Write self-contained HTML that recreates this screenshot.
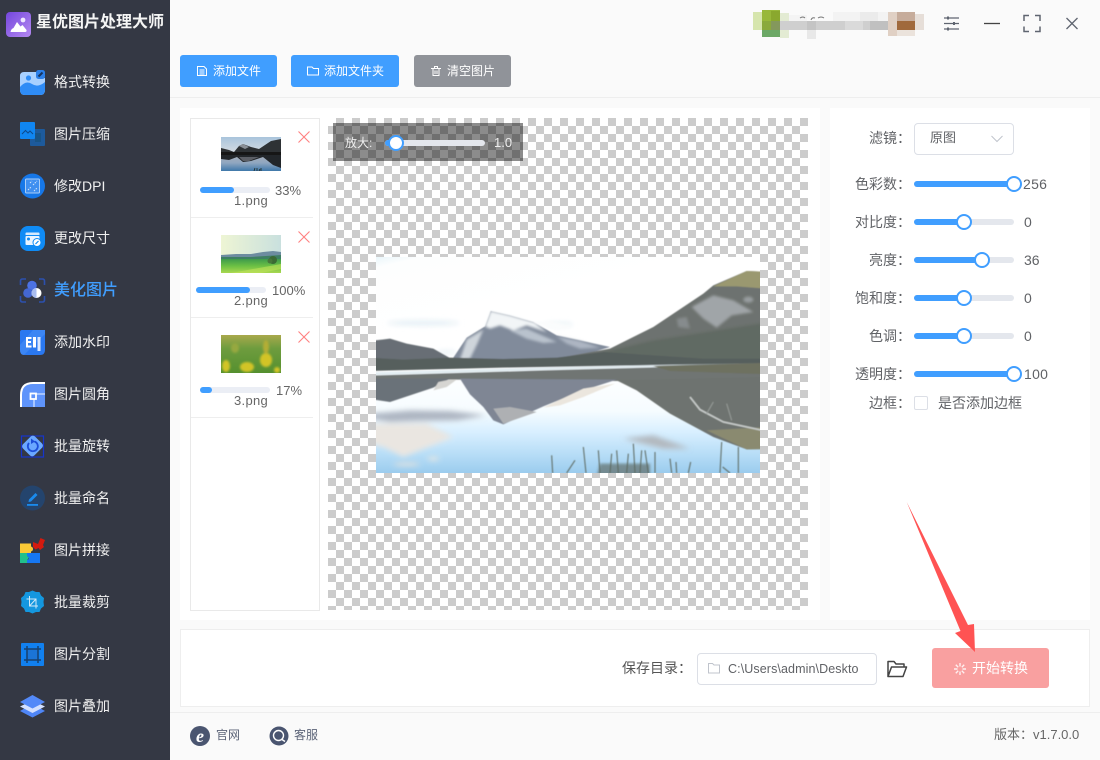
<!DOCTYPE html>
<html lang="zh-CN">
<head>
<meta charset="utf-8">
<title>星优图片处理大师</title>
<style>
*{box-sizing:border-box;margin:0;padding:0}
html,body{width:1100px;height:760px;overflow:hidden;background:#fafafa;font-family:"Liberation Sans","Noto Sans CJK SC",sans-serif}
.a{position:absolute}
.t{position:absolute;white-space:nowrap;line-height:20px}
#side{left:0;top:0;width:170px;height:760px;background:#343844}
.n{left:54px;font-size:14px;color:#f0f0f0}
.btn{position:absolute;top:55px;height:32px;border-radius:3px;background:#409eff}
.btn .t{top:6px;font-size:12px;color:#fff}
.lb{left:832px;width:79px;text-align:right;font-size:14px;color:#606266}
.val{left:1024px;font-size:14px;color:#606266}
.tr{position:absolute;left:914px;width:100px;height:6px;border-radius:3px;background:#e4e7ed}
.fl{position:absolute;left:0;top:0;height:6px;border-radius:3px;background:#409eff}
.kn{position:absolute;width:16px;height:16px;border-radius:50%;background:#fff;border:2px solid #409eff}
.pb{position:absolute;width:70px;height:6px;border-radius:3px;background:#ebeef5}
.pb i{position:absolute;left:0;top:0;height:6px;border-radius:3px;background:#409eff}
.sm{font-size:13px;color:#666}
</style>
</head>
<body>

<!-- Sidebar -->
<div id="side" class="a"></div>
<svg class="a" style="left:6px;top:12px" width="25" height="25" viewBox="0 0 25 25">
<defs><linearGradient id="lg" x1="0" y1="0" x2="1" y2="1"><stop offset="0" stop-color="#7446dc"/><stop offset="1" stop-color="#b58af2"/></linearGradient></defs>
<rect width="25" height="25" rx="4" fill="url(#lg)"/>
<circle cx="17" cy="8" r="2.400" fill="#eee6ff"/>
<path d="M4.500 20Q5 17 7.500 16L11 10L14.500 14.500L16.500 13L20.500 18Q21 20 19 20Z" fill="#fff"/>
</svg>
<div class="t" style="left:36px;top:13px;font-size:16px;font-weight:700;color:#f5f5f5">星优图片处理大师</div>

<!-- Icons -->
<svg class="a" style="left:0;top:0" width="300" height="760" viewBox="0 0 300 760">
<!-- 1 format -->
<path d="M24 72H38V78H45V90Q45 95 40 95H25Q20 95 20 90V76Q20 72 24 72Z" fill="#a8d0ff"/>
<path d="M20 87Q26 80 32 84T45 82V90Q45 95 40 95H25Q20 95 20 90Z" fill="#2f8cf6"/>
<circle cx="28.500" cy="78" r="2.600" fill="#2f8cf6"/>
<rect x="36" y="70" width="9" height="9" rx="2.500" fill="#2b7fe8"/>
<path d="M38.500 76.500L42.500 72.500" stroke="#16345f" stroke-width="2"/>
<!-- 2 compress -->
<rect x="30" y="129" width="15" height="17" rx="1" fill="#1d5a9c"/>
<rect x="20" y="122" width="15" height="17" rx="1" fill="#1086f2"/>
<path d="M22 134L25.500 130.500L28 133L30 131L33 134" fill="none" stroke="#0d4a8c" stroke-width="1"/>
<rect x="35" y="133" width="6" height="9" fill="#17507e" opacity=".7"/>
<!-- 3 dpi -->
<circle cx="32.500" cy="186" r="12.500" fill="#1677e8"/>
<rect x="25.500" y="179" width="14" height="14" rx="1" fill="#3f8ff0" stroke="#a9cdf7" stroke-width="1"/>
<path d="M28 190L31 187M33 185L37 181M30 183L32 181M34 191L37 188" stroke="#d5e6fb" stroke-width="1" stroke-dasharray="1.500 1"/>
<!-- 4 size -->
<rect x="20" y="226" width="25" height="25" rx="8" fill="#0f8bf5"/>
<path d="M26.500 232.500H38.500Q39.500 232.500 39.500 233.500V235H25.500V233.500Q25.500 232.500 26.500 232.500Z" fill="#d4e9fd"/>
<rect x="25.500" y="236" width="14" height="9" rx="1" fill="#e9f4ff"/>
<circle cx="28.500" cy="239" r="1.500" fill="#0f8bf5"/>
<circle cx="37" cy="242.500" r="4" fill="#fff" stroke="#0f8bf5"/>
<path d="M35.500 244L38.500 241" stroke="#0f8bf5" stroke-width="1.200"/>
<!-- 5 beautify -->
<path d="M20.500 285V281Q20.500 279 22.500 279H26M39 279H42.500Q44.500 279 44.500 281V285M44.500 296V300Q44.500 302 42.500 302H39M26 302H22.500Q20.500 302 20.500 300V296" fill="none" stroke="#2c50ad" stroke-width="1.600"/>
<circle cx="32" cy="285.500" r="4.800" fill="#4c72e4"/>
<circle cx="28" cy="293" r="4.800" fill="#4467d2"/>
<circle cx="36.500" cy="293" r="5" fill="#fff"/>
<path d="M36.500 288A5 5 0 0 0 36.500 298Z" fill="#a9bdf0"/>
<!-- 6 watermark -->
<path d="M22 330H45V350Q45 355 40 355H25Q20 355 20 350V332Q20 330 22 330Z" fill="#2a78f0"/>
<path d="M20 345L33 330H45V334L24 355Q20 355 20 350Z" fill="#4a90f6" opacity=".6"/>
<path d="M26 337H31.500V339H28V341H31V343H28V345.500H31.500V347.500H26Z" fill="#fff"/>
<rect x="33" y="337" width="3" height="10.500" fill="#fff"/>
<rect x="37.500" y="337" width="3" height="14" fill="#d7e6ff"/>
<!-- 7 corner -->
<path d="M20 407V395Q20 382 33 382H45V407Z" fill="#fff"/>
<path d="M22 407V395Q22 384 33 384H45V407Z" fill="#5f94fb"/>
<path d="M34 394H45M34 399V407" stroke="#cfe0ff" stroke-width="1.300"/>
<rect x="30.500" y="393.500" width="5.500" height="5.500" fill="#5f94fb" stroke="#fff" stroke-width="1.800"/>
<!-- 8 rotate -->
<rect x="21.500" y="436" width="22" height="21" fill="none" stroke="#1635cc" stroke-width="1.200"/>
<rect x="24.500" y="437.500" width="16" height="17" rx="3" transform="rotate(45 32.500 446)" fill="#6aa7ff"/>
<path d="M29 443A5 5 0 1 0 34.500 441.500" fill="none" stroke="#1d4ed8" stroke-width="1.800"/>
<path d="M31 438.500L35 441.500L31 444Z" fill="#1d4ed8"/>
<!-- 9 name -->
<circle cx="32.500" cy="498" r="12.500" fill="#24446d"/>
<path d="M29 499.500L35.500 493L37.500 495L31 501.500L28.500 502Z" fill="#1a8bee"/>
<rect x="27" y="504" width="11" height="1.800" fill="#1a8bee"/>
<!-- 10 puzzle -->
<path d="M20 543.500H31V546.500Q33 547 33 549T31 551.500V553.500H20Z" fill="#fbc936"/>
<path d="M20 553H27V556Q29 556.500 28.500 558T27 560V563H20Z" fill="#22c08c"/>
<path d="M27 553H40V563H27V560Q29 559.500 28.800 558T27 556Z" fill="#1677f2"/>
<path d="M33 542L38 544L40.500 538L45 540L43 545L44 547L40 550L38.500 548L35.500 549.500L33 547Z" fill="#d41a0e"/>
<!-- 11 crop -->
<path d="M32.500 590.500L36 592L39.500 592L41 595.500L44 598L43.500 602L44 606L41 608.500L39.500 612L36 612L32.500 613.500L29 612L25.500 612L24 608.500L21 606L21.500 602L21 598L24 595.500L25.500 592L29 592Z" fill="#1497df"/>
<path d="M29.500 596V606H38M26.500 599H36V608.500M29.500 606L36 599" fill="none" stroke="#cfe9f8" stroke-width="1"/>
<!-- 12 split -->
<rect x="21" y="643" width="23" height="23" rx="1" fill="#1180ef"/>
<rect x="26.500" y="648.500" width="12" height="12" fill="#1b74d6"/>
<path d="M27 646V663M38 646V663M24 649H41M24 660H41" stroke="#17406f" stroke-width="1.500"/>
<!-- 13 layers -->
<path d="M32.500 704L45 711L32.500 717.500L20 711Z" fill="#4f86f7"/>
<path d="M32.500 700.500L45 706.500L32.500 713L20 706.500Z" fill="#d3e0ff"/>
<path d="M32.500 695L45 702L32.500 708.500L20 702Z" fill="#5389f8"/>
<!-- footer icons -->
<circle cx="200" cy="736" r="10" fill="#4a5570"/>
<text x="200" y="742" text-anchor="middle" font-family="Liberation Serif" font-style="italic" font-weight="700" font-size="18" fill="#fff">e</text>
<circle cx="279" cy="736" r="9.500" fill="#4a5570"/>
<circle cx="278.500" cy="735.500" r="5" fill="none" stroke="#fff" stroke-width="1.400"/>
<path d="M282 739.500L285 741.500" stroke="#fff" stroke-width="1.400"/>
</svg>

<div class="t n" style="top:72px">格式转换</div>
<div class="t n" style="top:124px">图片压缩</div>
<div class="t n" style="top:176px">修改DPI</div>
<div class="t n" style="top:228px">更改尺寸</div>
<div class="t" style="left:54px;top:281px;font-size:16px;font-weight:500;color:#409eff">美化图片</div>
<div class="t n" style="top:332px">添加水印</div>
<div class="t n" style="top:384px">图片圆角</div>
<div class="t n" style="top:436px">批量旋转</div>
<div class="t n" style="top:488px">批量命名</div>
<div class="t n" style="top:540px">图片拼接</div>
<div class="t n" style="top:592px">批量裁剪</div>
<div class="t n" style="top:644px">图片分割</div>
<div class="t n" style="top:696px">图片叠加</div>

<!-- Top bar -->
<svg class="a" style="left:753px;top:8px" width="175" height="34" viewBox="753 8 175 34">
<rect x="753" y="12" width="9" height="18" fill="#d6e5ad"/>
<rect x="780" y="13" width="9" height="25" fill="#e3ebd3"/>
<rect x="789" y="15" width="18" height="7" fill="#f4f4f4"/>
<rect x="833" y="12" width="64" height="9" fill="#f3f3f3"/>
<rect x="860" y="12" width="18" height="9" fill="#ebebeb"/>
<rect x="771" y="21" width="153" height="9" fill="#cfcfcf"/>
<rect x="807" y="21" width="9" height="18" fill="#c4c4c4"/>
<rect x="807" y="30" width="9" height="9" fill="#e8e8e8"/>
<rect x="870" y="21" width="18" height="9" fill="#c0c0c0"/>
<rect x="845" y="21" width="18" height="9" fill="#dadada"/>
<rect x="762" y="10" width="18" height="11" fill="#98b83a"/>
<rect x="771" y="11" width="9" height="10" fill="#8aa82e"/>
<rect x="762" y="21" width="9" height="9" fill="#8aa93c"/>
<rect x="771" y="21" width="9" height="9" fill="#84985c"/>
<rect x="762" y="30" width="18" height="7" fill="#6ca866"/>
<rect x="888" y="12" width="9" height="24" fill="#e0d0c4"/>
<rect x="897" y="12" width="18" height="9" fill="#c6ac9b"/>
<rect x="897" y="21" width="18" height="9" fill="#a0693c"/>
<rect x="897" y="30" width="18" height="6" fill="#ebe3dc"/>
<rect x="915" y="14" width="9" height="16" fill="#e6ded8"/>
<path d="M800 18Q803 16 805 18M811 20Q812 17 815 18M818 18Q821 16 824 18" fill="none" stroke="#777" stroke-width="1"/>
</svg>
<svg class="a" style="left:940px;top:10px" width="150" height="28" viewBox="940 10 150 28" fill="none" stroke="#5f6570">
<path d="M944 18H959M944 23.500H959M944 29H959" stroke-width="1.200"/>
<path d="M948 16.500V19.500M954 22V25M948 27.500V30.500" stroke-width="2"/>
<path d="M984 23.500H1000" stroke-width="1.300" stroke="#444"/>
<path d="M1024 21V15.500H1029M1035 15.500H1040V21M1040 26.500V31.500H1035M1029 31.500H1024V26.500" stroke-width="1.500"/>
<path d="M1066.500 18L1077.500 29M1077.500 18L1066.500 29" stroke-width="1.300"/>
</svg>
<div class="a" style="left:170px;top:97px;width:930px;height:1px;background:#eeeeee"></div>

<!-- Buttons -->
<div class="btn" style="left:180px;width:97px"><div class="t" style="left:33px">添加文件</div></div>
<div class="btn" style="left:291px;width:108px"><div class="t" style="left:33px">添加文件夹</div></div>
<div class="btn" style="left:414px;width:97px;background:#909399"><div class="t" style="left:33px">清空图片</div></div>
<svg class="a" style="left:190px;top:60px" width="300" height="22" viewBox="190 60 300 22" fill="none" stroke="#fff" stroke-width="1">
<path d="M197.500 66.500H204L206.500 69V75.500H197.500ZM199.500 70H204.500M199.500 72H204.500M199.500 74H204.500"/>
<path d="M307.500 67H312L313.500 68.500H318.500V75H307.500Z"/>
<path d="M431 68.500H441M433 68.500V75.500H439V68.500M434.500 68.500V66.500H437.500V68.500M435 70.500V74M437 70.500V74"/>
</svg>

<!-- Panels -->
<div class="a" style="left:180px;top:108px;width:640px;height:512px;background:#fff"></div>
<div class="a" style="left:830px;top:108px;width:260px;height:512px;background:#fff"></div>
<div class="a" style="left:180px;top:629px;width:910px;height:78px;background:#fff;border:1px solid #eeeeee"></div>
<div class="a" style="left:170px;top:712px;width:930px;height:1px;background:#eeeeee"></div>

<!-- File list -->
<div class="a" style="left:190px;top:118px;width:130px;height:493px;border:1px solid #e9e9e9;background:#fff"></div>
<div class="a" style="left:191px;top:217px;width:122px;height:1px;background:#eeeeee"></div>
<div class="a" style="left:191px;top:317px;width:122px;height:1px;background:#eeeeee"></div>
<div class="a" style="left:191px;top:417px;width:122px;height:1px;background:#eeeeee"></div>

<!-- thumb 1 -->
<svg class="a" style="left:221px;top:137px" width="60" height="34" viewBox="0 0 60 34">
<defs>
<linearGradient id="s1" x1="0" y1="0" x2="0" y2="1"><stop offset="0" stop-color="#a9c4dc"/><stop offset=".5" stop-color="#d8dde2"/><stop offset="1" stop-color="#c7cdd3"/></linearGradient>
<linearGradient id="w1" x1="0" y1="0" x2="0" y2="1"><stop offset="0" stop-color="#aab0ba"/><stop offset=".5" stop-color="#8fa6c0"/><stop offset="1" stop-color="#3f78aa"/></linearGradient>
<filter id="b0"><feGaussianBlur stdDeviation=".35"/></filter>
</defs>
<rect width="60" height="34" fill="url(#s1)"/>
<g filter="url(#b0)">
<path d="M0 11L8 13L13 15L18 9L22 7L30 10L38 12L50 4L60 2V17H0Z" fill="#2e3236"/>
<path d="M18 9L22 7L28 10L24 12Z" fill="#8a8f96"/>
<rect y="15" width="60" height="3" fill="#121517"/>
<rect y="18" width="60" height="16" fill="url(#w1)"/>
<path d="M0 18H60V31L52 28L42 20L30 24L22 25L16 20L8 23L0 22Z" fill="#23262a"/>
<path d="M18 20H38L28 24H22Z" fill="#5c5f66"/>
<path d="M33 34L34 31M36 34V31M38 34L39 32M40 34V31" stroke="#1f2a26" stroke-width=".8"/>
</g>
</svg>
<!-- thumb 2 -->
<svg class="a" style="left:221px;top:235px" width="60" height="38" viewBox="0 0 60 38">
<defs>
<linearGradient id="s2" x1="0" y1="0" x2="1" y2="0"><stop offset="0" stop-color="#eef5d4"/><stop offset="1" stop-color="#c9e0de"/></linearGradient>
<linearGradient id="g2" x1="0" y1="0" x2="0" y2="1"><stop offset="0" stop-color="#3e9a4c"/><stop offset=".5" stop-color="#6cc044"/><stop offset="1" stop-color="#a9d850"/></linearGradient>
</defs>
<rect width="60" height="38" fill="url(#s2)"/>
<path d="M0 20L15 19L30 19L42 17L52 16L60 17V24H0Z" fill="#6d8ca0"/>
<path d="M0 22L30 22L60 20V26H0Z" fill="#3f7f63"/>
<rect y="24" width="60" height="14" fill="url(#g2)"/>
<path d="M10 38L60 29V34L40 38Z" fill="#bfe25a" opacity=".6"/>
<circle cx="52" cy="25" r="4" fill="#3b6a34"/><circle cx="49" cy="26" r="2.500" fill="#47763a"/>
</svg>
<!-- thumb 3 -->
<svg class="a" style="left:221px;top:335px" width="60" height="38" viewBox="0 0 60 38">
<defs>
<linearGradient id="g3" x1="0" y1="0" x2="0" y2="1"><stop offset="0" stop-color="#a9a94c"/><stop offset=".35" stop-color="#6e9c3e"/><stop offset="1" stop-color="#55902f"/></linearGradient>
<filter id="bl" x="-10%" y="-10%" width="120%" height="120%"><feGaussianBlur stdDeviation="1"/></filter>
</defs>
<rect width="60" height="38" fill="url(#g3)"/>
<g filter="url(#bl)" fill="#d2c428">
<ellipse cx="5" cy="31" rx="4" ry="6"/><ellipse cx="26" cy="32" rx="7" ry="5"/>
<ellipse cx="45" cy="25" rx="6" ry="7"/><ellipse cx="45" cy="12" rx="3" ry="7" fill="#b3ad35"/>
<ellipse cx="56" cy="35" rx="3" ry="3"/><ellipse cx="14" cy="13" rx="4" ry="5" fill="#96a83f"/>
</g>
</svg>

<svg class="a" style="left:296px;top:128px" width="18" height="218" viewBox="296 128 18 218" fill="none" stroke="#ff8080" stroke-width="1.100">
<path d="M298.500 131.500L309.500 142.500M309.500 131.500L298.500 142.500"/>
<path d="M298.500 231.500L309.500 242.500M309.500 231.500L298.500 242.500"/>
<path d="M298.500 331.500L309.500 342.500M309.500 331.500L298.500 342.500"/>
</svg>

<div class="pb" style="left:200px;top:187px"><i style="width:34px"></i></div>
<div class="t sm" style="left:275px;top:181px">33%</div>
<div class="t sm" style="left:234px;top:191px;letter-spacing:.3px">1.png</div>
<div class="pb" style="left:196px;top:287px"><i style="width:54px"></i></div>
<div class="t sm" style="left:272px;top:281px">100%</div>
<div class="t sm" style="left:234px;top:291px;letter-spacing:.3px">2.png</div>
<div class="pb" style="left:200px;top:387px"><i style="width:12px"></i></div>
<div class="t sm" style="left:276px;top:381px">17%</div>
<div class="t sm" style="left:234px;top:391px;letter-spacing:.3px">3.png</div>

<!-- Canvas -->
<div class="a" style="left:328px;top:118px;width:480px;height:492px;background:repeating-conic-gradient(#ccc 0 25%,#fff 0 50%) 0 0/16px 16px"></div>

<!-- Photo -->
<svg class="a" style="left:376px;top:257px" width="384" height="216" viewBox="18 20 1152 648">
<defs>
<linearGradient id="sky" x1="0" y1="0" x2=".35" y2=".45"><stop offset="0" stop-color="#dcf0f8"/><stop offset=".22" stop-color="#fdfefe"/><stop offset="1" stop-color="#ffffff"/></linearGradient>
<linearGradient id="wat" x1="0" y1="0" x2="0" y2="1"><stop offset="0" stop-color="#ffffff"/><stop offset=".38" stop-color="#f6fcff"/><stop offset=".58" stop-color="#d8efff"/><stop offset=".8" stop-color="#b5dcf6"/><stop offset="1" stop-color="#95c8ec"/></linearGradient>
<linearGradient id="stp" x1="0" y1="0" x2="1" y2="0"><stop offset="0" stop-color="#e4eef2"/><stop offset=".7" stop-color="#dfe9ee"/><stop offset=".85" stop-color="#8f9a9a"/><stop offset="1" stop-color="#6e7160"/></linearGradient>
<filter id="b1" x="-2%" y="-2%" width="104%" height="104%"><feGaussianBlur stdDeviation="1.800"/></filter>
<filter id="b2" x="-20%" y="-40%" width="140%" height="180%"><feGaussianBlur stdDeviation="8"/></filter>
<filter id="b3" x="-10%" y="-10%" width="120%" height="120%"><feGaussianBlur stdDeviation="4"/></filter>
</defs>
<rect x="0" y="0" width="1200" height="362" fill="url(#sky)"/>
<rect x="0" y="360" width="1200" height="320" fill="url(#wat)"/>
<g filter="url(#b1)">
<g filter="url(#b2)" fill="#e4eff5"><ellipse cx="160" cy="218" rx="110" ry="8"/><ellipse cx="230" cy="305" rx="30" ry="5"/><ellipse cx="570" cy="222" rx="40" ry="6"/></g>
<!-- left hill -->
<path d="M0 272L60 265L110 280L190 295L238 322V350H0Z" fill="#686e74"/>
<!-- center mountain -->
<path d="M248 325L290 262L345 228L362 182L420 195L490 215L560 255L630 270L720 290L680 302L600 322L400 335L248 332Z" fill="#818b9b"/>
<g filter="url(#b3)">
<path d="M345 228L362 182L420 195L490 215L530 245L470 225L430 240L390 225L360 235Z" fill="#f2f5f7"/>
<path d="M270 328L290 268L340 238L322 280L300 325Z" fill="#cfd5db"/>
<path d="M420 240L470 235L560 275L520 278L470 265Z" fill="#b9c2cd"/>
<path d="M560 258L630 272L690 292L630 295L590 280Z" fill="#adb6c3"/>
<path d="M490 215L540 210L610 228L560 240Z" fill="#fafcfd"/>
</g>
<!-- right mountain -->
<path d="M570 322L720 295L850 230L1000 130L1030 105L1130 62L1200 65V345H570Z" fill="#6d726f"/>
<path d="M1030 108L1130 62L1200 65V116L1100 108Z" fill="#9a9870"/>
<g filter="url(#b3)">
<path d="M965 170L1030 135L1090 150L1150 185L1085 195L1040 232L1000 205Z" fill="#a0a5a8"/>
<path d="M920 205L950 200L960 235L925 230Z" fill="#868b8d"/>
<ellipse cx="1135" cy="148" rx="15" ry="9" fill="#999ea0"/>
<path d="M700 305L850 270L1200 215V340H700Z" fill="#5c665e" opacity=".7"/>
</g>
<!-- trees -->
<path d="M0 322L100 328L240 322L400 326L560 322L700 305L1000 325L1200 325V345L800 345L400 352L0 362Z" fill="#565f5d"/>
<!-- water -->
<path d="M0 366L500 352L900 343L1200 338V350L900 350L500 360L0 375Z" fill="url(#stp)"/>
<path d="M0 376L500 361L900 350L1000 345L1200 340V400L740 392L270 388L0 388Z" fill="#6f7573"/>
<path d="M850 347L1200 338V372L900 362Z" fill="#6e7160"/>
<path d="M0 385H240L190 412L60 455L0 446Z" fill="#6b7279"/>
<path d="M205 395L240 388L260 388L230 410L190 420Z" fill="#d6d5d2"/>
<path d="M270 385L740 388L640 420L520 468L400 522L370 510L340 470L300 432Z" fill="#7f8694"/>
<path d="M520 472L640 415L735 400L640 440L570 465Z" fill="#ebe6de"/>
<path d="M370 475L420 470L500 485L400 520Z" fill="#aeb0b3"/>
<path d="M740 390L1200 380V596L1130 597L1030 560L900 490L800 420Z" fill="#6e736f"/>
<path d="M1010 540L1200 530V596L1130 597Z" fill="#8a8a70"/>
<path d="M960 440L990 478L1060 515L1200 545" fill="none" stroke="#c6cac9" stroke-width="5"/>
<path d="M1070 460L1085 510M1030 455L1010 490" fill="none" stroke="#979c9a" stroke-width="3"/>
<g filter="url(#b2)">
<path d="M0 490L120 480L240 482L350 495L260 510L150 512L60 515L0 505Z" fill="#aeb6c2"/>
<path d="M0 520L170 520L250 560L150 600L100 620L40 590L0 580Z" fill="#eae6e1"/>
<path d="M760 565L850 555L960 595L880 595Z" fill="#b2b8be"/>
<ellipse cx="110" cy="642" rx="40" ry="5" fill="#e5e3de"/><ellipse cx="190" cy="625" rx="18" ry="5" fill="#efe9e0"/>
</g>
<path d="M548 668L545 615M590 668L615 630M648 668L640 590M690 668L685 600M720 668L725 610M745 668L740 600M770 668L775 610M795 668L790 580M810 668L815 600M835 668L825 600M855 668L855 605M905 668L900 625M920 668L918 635M955 668L962 635M1050 668L1055 575M1058 650L1080 668M1105 668L1105 590" fill="none" stroke="#5d6a62" stroke-width="3.500" opacity=".9"/>
<path d="M680 680H840V640H690Z" fill="#5c6860" opacity=".65" filter="url(#b3)"/>
</g>
</svg>

<!-- Zoom overlay -->
<div class="a" style="left:333px;top:123px;width:190px;height:38px;background:rgba(0,0,0,.45)"></div>
<div class="t" style="left:345px;top:133px;font-size:12px;color:#eeeeee">放大:</div>
<div class="a" style="left:385px;top:140px;width:100px;height:6px;border-radius:3px;background:#e4e7ed"></div>
<div class="a" style="left:385px;top:140px;width:11px;height:6px;border-radius:3px;background:#409eff"></div>
<div class="kn" style="left:388px;top:135px"></div>
<div class="t" style="left:494px;top:133px;font-size:13px;color:#eeeeee">1.0</div>

<!-- Right settings -->
<div class="t lb" style="top:128px">滤镜：</div>
<div class="a" style="left:914px;top:123px;width:100px;height:32px;border:1px solid #dcdfe6;border-radius:4px;background:#fff"></div>
<div class="t" style="left:930px;top:128px;font-size:13px;color:#606266">原图</div>
<svg class="a" style="left:990px;top:134px" width="14" height="10" viewBox="0 0 14 10"><path d="M1.500 2L7 7.500L12.500 2" fill="none" stroke="#c0c4cc" stroke-width="1"/></svg>

<div class="t lb" style="top:174px">色彩数：</div>
<div class="tr" style="top:181px"><div class="fl" style="width:100px"></div></div>
<div class="kn" style="left:1006px;top:176px"></div>
<div class="t val" style="left:1023px;top:174px;letter-spacing:.3px">256</div>

<div class="t lb" style="top:212px">对比度：</div>
<div class="tr" style="top:219px"><div class="fl" style="width:50px"></div></div>
<div class="kn" style="left:956px;top:214px"></div>
<div class="t val" style="top:212px">0</div>

<div class="t lb" style="top:250px">亮度：</div>
<div class="tr" style="top:257px"><div class="fl" style="width:68px"></div></div>
<div class="kn" style="left:974px;top:252px"></div>
<div class="t val" style="top:250px">36</div>

<div class="t lb" style="top:288px">饱和度：</div>
<div class="tr" style="top:295px"><div class="fl" style="width:50px"></div></div>
<div class="kn" style="left:956px;top:290px"></div>
<div class="t val" style="top:288px">0</div>

<div class="t lb" style="top:326px">色调：</div>
<div class="tr" style="top:333px"><div class="fl" style="width:50px"></div></div>
<div class="kn" style="left:956px;top:328px"></div>
<div class="t val" style="top:326px">0</div>

<div class="t lb" style="top:364px">透明度：</div>
<div class="tr" style="top:371px"><div class="fl" style="width:100px"></div></div>
<div class="kn" style="left:1006px;top:366px"></div>
<div class="t val" style="top:364px;letter-spacing:.3px">100</div>

<div class="t lb" style="top:393px">边框：</div>
<div class="a" style="left:914px;top:396px;width:14px;height:14px;border:1px solid #dcdfe6;border-radius:2px;background:#fff"></div>
<div class="t" style="left:938px;top:393px;font-size:14px;color:#606266">是否添加边框</div>

<!-- Save row -->
<div class="t" style="left:622px;top:658px;font-size:14px;color:#555">保存目录：</div>
<div class="a" style="left:697px;top:653px;width:180px;height:32px;border:1px solid #dcdfe6;border-radius:4px;background:#fff"></div>
<svg class="a" style="left:707px;top:661px" width="14" height="14" viewBox="0 0 14 14"><path d="M1.500 2.500H5.500L7 4H12.500V12H1.500Z" fill="none" stroke="#c0c4cc"/></svg>
<div class="t" style="left:728px;top:659px;font-size:12.500px;color:#606266;letter-spacing:.1px">C:\Users\admin\Deskto</div>
<svg class="a" style="left:886px;top:659px" width="22" height="20" viewBox="0 0 22 20"><path d="M2 17.500V2.500H8L10 5H18V8M2 17.500H17L20.500 8H5.500Z" fill="none" stroke="#444" stroke-width="1.500" stroke-linejoin="round"/></svg>

<div class="a" style="left:932px;top:648px;width:117px;height:40px;border-radius:3px;background:#f9a0a0"></div>
<svg class="a" style="left:953px;top:662px" width="14" height="14" viewBox="0 0 14 14" stroke="#fff" stroke-width="1.400" opacity=".85"><path d="M7 1V4.500M7 9.500V13M1 7H4.500M9.500 7H13M2.800 2.800L5.200 5.200M8.800 8.800L11.200 11.200M11.200 2.800L8.800 5.200M5.200 8.800L2.800 11.200"/></svg>
<div class="t" style="left:972px;top:658px;font-size:14px;color:#fff">开始转换</div>

<!-- Red arrow -->
<svg class="a" style="left:0;top:0" width="1100" height="760" viewBox="0 0 1100 760"><path d="M906.700 502L968 625L974 624L975 652L955 633L960.500 631Z" fill="#ff5353"/></svg>

<!-- Footer -->
<div class="t" style="left:216px;top:725px;font-size:12px;color:#5c6478">官网</div>
<div class="t" style="left:294px;top:725px;font-size:12px;color:#5c6478">客服</div>
<div class="t" style="left:994px;top:725px;font-size:13px;color:#666">版本：v1.7.0.0</div>

</body>
</html>
